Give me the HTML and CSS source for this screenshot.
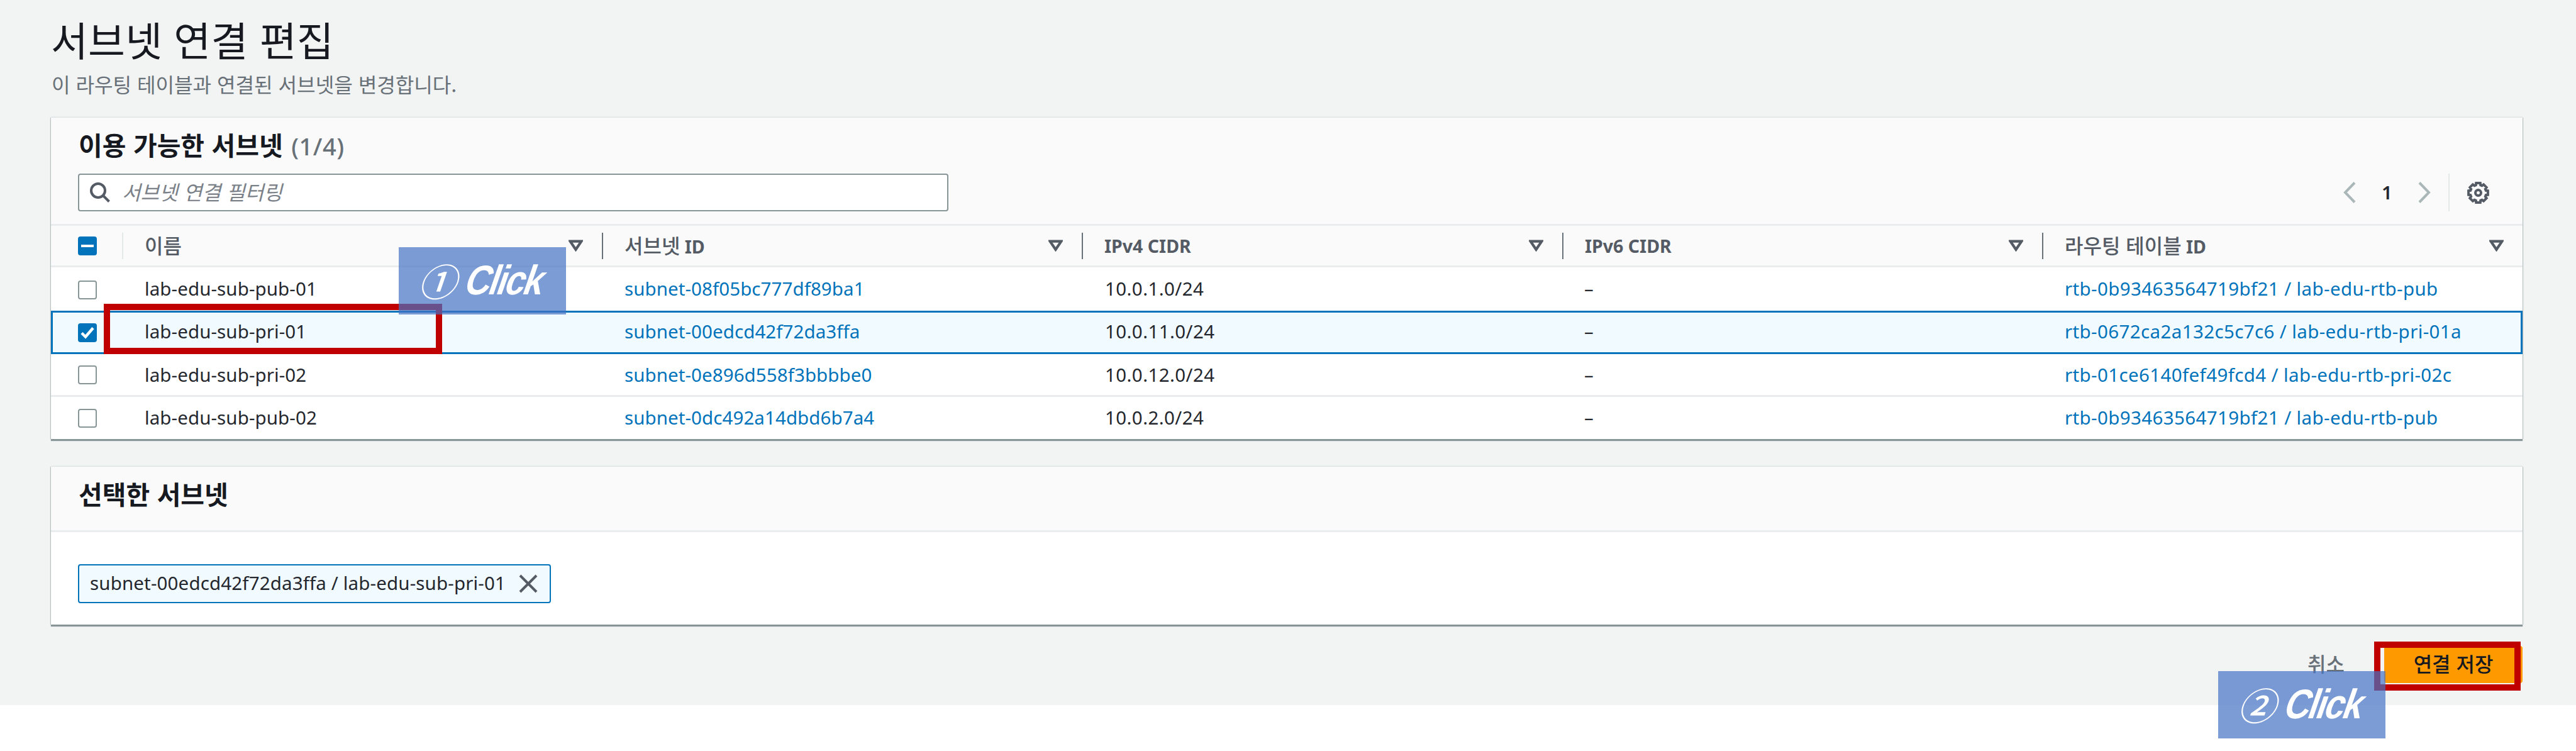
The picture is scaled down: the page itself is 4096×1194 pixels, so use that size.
FILE: index.html
```html
<!DOCTYPE html>
<html lang="ko">
<head>
<meta charset="utf-8">
<title>서브넷 연결 편집</title>
<link rel="stylesheet" href="styles.css">
</head>
<body>
<main class="page">
  <header class="page-header">
    <h1 class="page-title">서브넷 연결 편집</h1>
    <p class="page-description">이 라우팅 테이블과 연결된 서브넷을 변경합니다.</p>
  </header>

  <section class="panel panel-available">
    <div class="panel-top">
      <h2 class="panel-title">이용 가능한 서브넷 <span class="counter">(1/4)</span></h2>
      <div class="tools">
        <div class="search">
          <svg class="search-icon" viewBox="0 0 32 32"><circle cx="13" cy="13" r="11"/><path d="M21 21l9.500 9.500"/></svg>
          <span class="placeholder">서브넷 연결 필터링</span>
        </div>
        <div class="pager">
          <svg class="chevron" viewBox="0 0 20 34"><path d="M18 1.500L3 17l15 15.500"/></svg>
          <span class="page-number">1</span>
          <svg class="chevron" viewBox="0 0 20 34"><path d="M2 1.500L17 17L2 32.500"/></svg>
          <span class="pager-divider"></span>
          <svg class="gear" viewBox="-17.500 -17.500 35 35"><path d="M-3.300-15.400H3.300L3.700-12.200L6-11.300L8.600-13.200L13.200-8.600L11.300-6L12.200-3.700L15.400-3.300V3.300L12.200 3.700L11.300 6L13.200 8.600L8.600 13.200L6 11.300L3.700 12.200L3.300 15.400H-3.300L-3.700 12.200L-6 11.300L-8.600 13.200L-13.200 8.600L-11.300 6L-12.200 3.700L-15.400 3.300V-3.300L-12.200-3.700L-11.300-6L-13.200-8.600L-8.600-13.200L-6-11.300L-3.700-12.200Z"/><circle r="4.500"/></svg>
        </div>
      </div>
    </div>

    <div class="table">
      <div class="row head">
        <div class="check"><span class="box mixed"></span></div>
        <div class="cell c0"><span class="ko">이름</span><svg class="caret" viewBox="0 0 22 18"><path d="M2.500 2.500h17L11 15z"/></svg></div>
        <div class="cell c1"><span><span class="ko">서브넷</span> ID</span><svg class="caret" viewBox="0 0 22 18"><path d="M2.500 2.500h17L11 15z"/></svg></div>
        <div class="cell c2"><span>IPv4 CIDR</span><svg class="caret" viewBox="0 0 22 18"><path d="M2.500 2.500h17L11 15z"/></svg></div>
        <div class="cell c3"><span>IPv6 CIDR</span><svg class="caret" viewBox="0 0 22 18"><path d="M2.500 2.500h17L11 15z"/></svg></div>
        <div class="cell c4"><span><span class="ko">라우팅 테이블</span> ID</span><svg class="caret" viewBox="0 0 22 18"><path d="M2.500 2.500h17L11 15z"/></svg></div>
      </div>
      <div class="row first">
        <div class="check"><span class="box"></span></div>
        <div class="cell c0">lab-edu-sub-pub-01</div>
        <div class="cell c1 link">subnet-08f05bc777df89ba1</div>
        <div class="cell c2">10.0.1.0/24</div>
        <div class="cell c3">–</div>
        <div class="cell c4 link">rtb-0b93463564719bf21 / lab-edu-rtb-pub</div>
      </div>
      <div class="row selected">
        <div class="check"><span class="box checked"><svg viewBox="0 0 30 30"><path d="M6 15.500l6 6L24 7.500"/></svg></span></div>
        <div class="cell c0">lab-edu-sub-pri-01</div>
        <div class="cell c1 link">subnet-00edcd42f72da3ffa</div>
        <div class="cell c2">10.0.11.0/24</div>
        <div class="cell c3">–</div>
        <div class="cell c4 link">rtb-0672ca2a132c5c7c6 / lab-edu-rtb-pri-01a</div>
      </div>
      <div class="row third">
        <div class="check"><span class="box"></span></div>
        <div class="cell c0">lab-edu-sub-pri-02</div>
        <div class="cell c1 link">subnet-0e896d558f3bbbbe0</div>
        <div class="cell c2">10.0.12.0/24</div>
        <div class="cell c3">–</div>
        <div class="cell c4 link">rtb-01ce6140fef49fcd4 / lab-edu-rtb-pri-02c</div>
      </div>
      <div class="row last">
        <div class="check"><span class="box"></span></div>
        <div class="cell c0">lab-edu-sub-pub-02</div>
        <div class="cell c1 link">subnet-0dc492a14dbd6b7a4</div>
        <div class="cell c2">10.0.2.0/24</div>
        <div class="cell c3">–</div>
        <div class="cell c4 link">rtb-0b93463564719bf21 / lab-edu-rtb-pub</div>
      </div>
    </div>
  </section>

  <section class="panel panel-selected">
    <div class="selected-head"><h2 class="panel-title">선택한 서브넷</h2></div>
    <div class="selected-body">
      <div class="token">
        <span class="token-label">subnet-00edcd42f72da3ffa / lab-edu-sub-pri-01</span>
        <svg class="close" viewBox="0 0 30 30"><path d="M2 2l26 26M28 2L2 28"/></svg>
      </div>
    </div>
  </section>

  <footer class="actions">
    <span class="cancel">취소</span>
    <span class="save">연결 저장</span>
  </footer>
</main>

<div class="outline outline-row"></div>
<div class="outline outline-save"></div>
<div class="step step-one"><span class="num">①</span><span class="word">Click</span></div>
<div class="step step-two"><span class="num">②</span><span class="word">Click</span></div>
</body>
</html>
```
FILE: styles.css
```css
* { box-sizing: border-box; }

body {
  position: relative;
  margin: 0;
  height: 1194px;
  overflow: hidden;
  background: #fff;
  color: #24272d;
  font-family: "Noto Sans", "Noto Sans CJK KR", sans-serif;
  font-size: 29.5px;
}

svg { display: block; flex: none; fill: none; }
h1, h2, p { margin: 0; }

.page {
  height: 1121px;
  padding: 0 85px 0 81px;
  background: #f2f3f3;
}

.page-header {
  height: 187px;
  padding: 23px 0 0;
  font-family: "Noto Sans CJK KR", sans-serif;
}
.page-title {
  font-size: 64px;
  line-height: 76px;
  font-weight: 400;
  letter-spacing: .2px;
  color: #16191f;
  white-space: nowrap;
}
.page-description {
  margin: 12px 0 0 1px;
  font-size: 32.2px;
  line-height: 44px;
  font-weight: 400;
  letter-spacing: -.08px;
  color: #687078;
}

.panel {
  background: #fff;
  box-shadow: 0 3px 1px #879596, 1px 0 1px #c0c7c8, -1px 0 1px #c0c7c8, 0 -2px 0 #eaeded;
}
.panel-available { height: 511px; }
.panel-selected { height: 251px; margin-top: 44px; }

.panel-top {
  height: 172px;
  padding: 17px 32px 0 43px;
  background: #fafafa;
  border-bottom: 3px solid #eaeded;
}
.panel-title {
  height: 50px;
  padding-left: 1px;
  line-height: 50px;
  font-family: "Noto Sans CJK KR", sans-serif;
  font-size: 41px;
  font-weight: 700;
  color: #16191f;
  white-space: nowrap;
}
.counter {
  margin-left: 2px;
  font-family: "Noto Sans", sans-serif;
  font-size: 38px;
  font-weight: 500;
  letter-spacing: .5px;
  color: #687078;
}

.tools {
  display: flex;
  justify-content: space-between;
  margin-top: 22px;
}
.search {
  display: flex;
  align-items: center;
  width: 1384px;
  height: 60px;
  padding-left: 17px;
  background: #fff;
  border: 2.500px solid #879596;
  border-radius: 4px;
}
.search-icon { width: 32px; height: 32px; stroke: #545b64; stroke-width: 4; }
.placeholder {
  margin: -4px 0 0 19px;
  font-family: "Noto Sans CJK KR", sans-serif;
  font-size: 32.2px;
  font-weight: 400;
  font-style: italic;
  line-height: 44px;
  color: #7a8188;
}
.pager { display: flex; align-items: center; padding-right: 21px; }
.chevron { width: 20px; height: 34px; stroke: #aab7b8; stroke-width: 4; }
.page-number { width: 99px; margin-top: -2px; text-align: center; font-weight: 600; }
.pager-divider { width: 2px; height: 60px; margin: 0 28px; background: #e3e8e8; }
.gear { width: 35px; height: 35px; stroke: #545b64; stroke-width: 4; }

.row {
  display: grid;
  grid-template-columns: 114px 763px 763px 764px 763px 764px;
  border-bottom: 3px solid #eaeded;
}
.check { display: flex; align-items: center; padding-left: 43px; }
.cell {
  display: flex;
  align-items: center;
  padding-left: 35px;
  line-height: 40px;
  white-space: nowrap;
}
.c0 { letter-spacing: .1px; }
.c1 { letter-spacing: .08px; }
.c2 { padding-left: 36px; letter-spacing: .4px; }
.c3 { padding-left: 34px; }
.c4 { letter-spacing: .38px; }
.link { color: #0073bb; }

.head { height: 66px; background: #fafafa; color: #545b64; font-weight: 700; }
.head .cell {
  height: 42px;
  align-self: center;
  justify-content: space-between;
  padding: 0 30px 0 34px;
  border-left: 2px solid #687078;
  font-size: 28.5px;
  letter-spacing: 0;
  transform: translateX(-1px);
}
.head .c0 { border-left-color: #e3e8e8; }
.head .ko { font-family: "Noto Sans CJK KR", sans-serif; font-size: 32px; font-weight: 500; }
.head .c0 .ko { margin-top: -3px; }
.caret { width: 23px; height: 19px; stroke: #545b64; stroke-width: 4; }

.first { height: 69px; border-bottom: 0; }
.first .check { padding-top: 3px; }
.first .cell { padding-bottom: 1px; }
.selected {
  height: 69px;
  background: #f1faff;
  border: 3px solid #0073bb;
  grid-template-columns: 111px 763px 763px 764px 763px 761px;
}
.selected .check { padding-left: 40px; }
.selected .cell { padding-bottom: 3px; }
.third { height: 68px; }
.last { height: 68px; border-bottom: 0; }
.last .cell { padding-bottom: 2px; }

.box {
  width: 30px;
  height: 30px;
  background: #fff;
  border: 2.500px solid #879596;
  border-radius: 4px;
}
.mixed {
  display: flex;
  align-items: center;
  justify-content: center;
  border: 0;
  background: #0073bb;
}
.mixed::before { content: ""; width: 20px; height: 4px; background: #fff; }
.checked { border: 0; background: #0073bb; }
.checked svg { stroke: #fff; stroke-width: 4.500; }

.selected-head {
  height: 104px;
  padding: 17px 43px 0;
  background: #fafafa;
  border-bottom: 3px solid #eaeded;
}
.selected-body { padding: 51px 43px 0; }
.token {
  display: flex;
  align-items: center;
  justify-content: space-between;
  width: 752px;
  height: 62px;
  padding: 0 19px 0 17px;
  background: #f1faff;
  border: 2.500px solid #0073bb;
  border-radius: 4px;
  letter-spacing: .15px;
  white-space: nowrap;
}
.token-label { margin-top: -3px; }
.close { width: 30px; height: 30px; stroke: #545b64; stroke-width: 4; }

.actions {
  display: flex;
  justify-content: flex-end;
  margin-top: 34px;
  font-family: "Noto Sans CJK KR", sans-serif;
  font-size: 32px;
  font-weight: 500;
  line-height: 54px;
}
.cancel { margin-right: 63px; color: #687078; }
.save {
  width: 220px;
  height: 59px;
  background: #ff9900;
  border-radius: 4px;
  color: #16191f;
  text-align: center;
}

/* Callouts laid over the console */
.outline { position: absolute; border: 10px solid #c00000; }
.outline-row { left: 165px; top: 483px; width: 538px; height: 80px; }
.outline-save { left: 3775px; top: 1020px; width: 233px; height: 78px; }
.step {
  position: absolute;
  width: 266px;
  height: 107px;
  background: rgba(68, 114, 196, .7);
  color: #fff;
  display: flex;
  align-items: center;
  padding: 0 0 3px 38px;
  white-space: nowrap;
}
.step-one { left: 634px; top: 393px; }
.step-two { left: 3527px; top: 1067px; }
.num {
  font: 500 60px/104px "Noto Sans CJK KR", sans-serif;
  transform: skewX(-19deg);
}
.word {
  margin-left: 11px;
  font: 700 66px/104px "Liberation Sans", sans-serif;
  letter-spacing: -3px;
  transform: skewX(-19deg) scaleX(.85);
  transform-origin: left center;
}
```
